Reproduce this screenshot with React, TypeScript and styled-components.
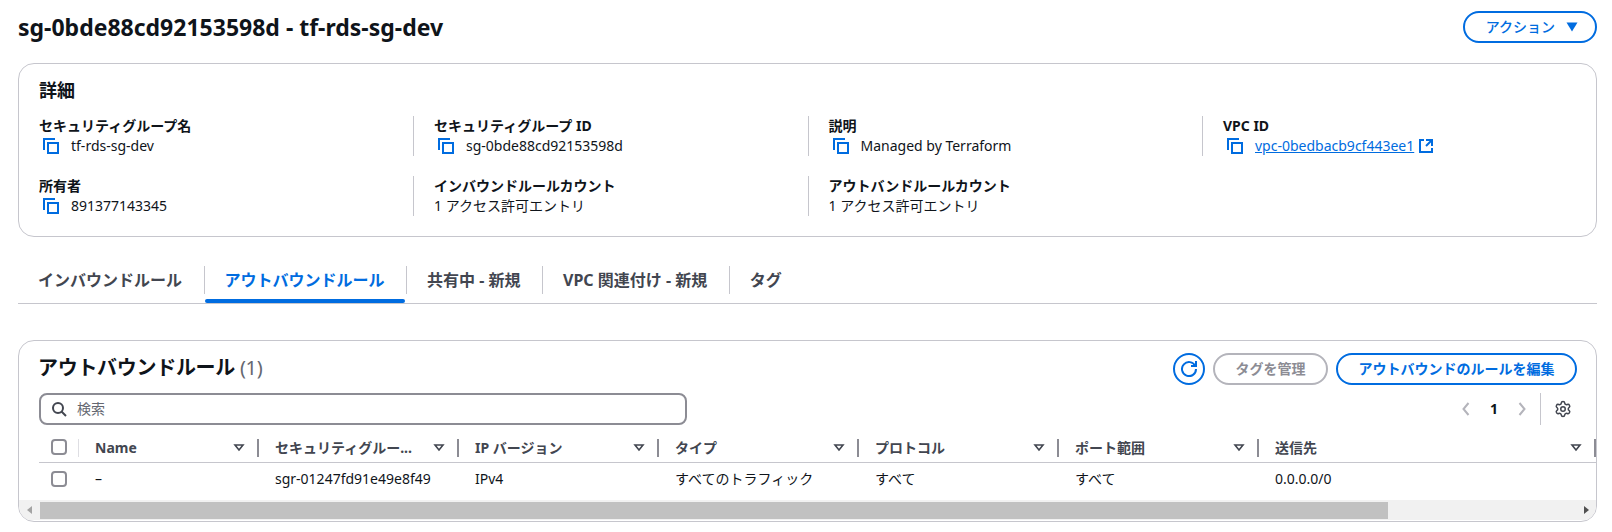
import React from 'react'
import styled, { createGlobalStyle } from 'styled-components'
import { Settings } from 'lucide-react'

const blue = '#006ce0'
const ink = '#0f141a'
const soft = '#424650'
const line = '#c6c6cd'

const GlobalStyle = createGlobalStyle`
    html, body {
        margin: 0;
        background: #fff;
    }
    body {
        font-family: "Noto Sans", "Noto Sans CJK JP", sans-serif;
        font-size: 14px;
        line-height: 20px;
        color: ${ink};
    }
    * {
        box-sizing: border-box;
    }
`

const CopyIcon = () => (
    <Glyph viewBox="0 0 16 16">
        <path d="M1 12V1h11" />
        <rect x="5" y="5" width="10" height="10" />
    </Glyph>
)

const ExternalIcon = () => (
    <Glyph viewBox="0 0 16 16">
        <path d="M14 8V2H8" />
        <path d="M14 2 8 8" />
        <path d="M6 2H2v12h12v-4" />
    </Glyph>
)

const RefreshIcon = () => (
    <Glyph viewBox="0 0 16 16">
        <path d="M10 5h5V0" />
        <path d="M15 8a7 7 0 1 1-.7-3" />
    </Glyph>
)

const SearchIcon = () => (
    <Glyph viewBox="0 0 16 16">
        <circle cx="7" cy="7" r="5" />
        <path d="m15 15-4.500-4.500" />
    </Glyph>
)

const FilterCaret = () => (
    <Caret viewBox="0 0 16 16">
        <path d="M4 5h8l-4 5z" />
    </Caret>
)

const details = [
    [
        { label: 'セキュリティグループ名', value: 'tf-rds-sg-dev', copy: true },
        { label: 'セキュリティグループ ID', value: 'sg-0bde88cd92153598d', copy: true },
        { label: '説明', value: 'Managed by Terraform', copy: true },
        { label: 'VPC ID', value: 'vpc-0bedbacb9cf443ee1', copy: true, link: true }
    ],
    [
        { label: '所有者', value: '891377143345', copy: true },
        { label: 'インバウンドルールカウント', value: '1 アクセス許可エントリ' },
        { label: 'アウトバンドルールカウント', value: '1 アクセス許可エントリ' }
    ]
]

const tabs = ['インバウンドルール', 'アウトバウンドルール', '共有中 - 新規', 'VPC 関連付け - 新規', 'タグ']

const columns = [
    { title: 'Name', width: 180, cell: '–' },
    { title: 'セキュリティグルー...', width: 200, cell: 'sgr-01247fd91e49e8f49' },
    { title: 'IP バージョン', width: 200, cell: 'IPv4' },
    { title: 'タイプ', width: 200, cell: 'すべてのトラフィック' },
    { title: 'プロトコル', width: 200, cell: 'すべて' },
    { title: 'ポート範囲', width: 200, cell: 'すべて' },
    { title: '送信先', width: 337, cell: '0.0.0.0/0' }
]

const App = () => (
    <>
        <GlobalStyle />
        <Page>
            <PageHeader>
                <Title>sg-0bde88cd92153598d - tf-rds-sg-dev</Title>
                <ActionButton>
                    アクション
                    <svg width="12" height="10" viewBox="0 0 12 10">
                        <path d="M0.500 0.500h11L6 9.500z" fill={blue} />
                    </svg>
                </ActionButton>
            </PageHeader>

            <Card>
                <CardHeading>詳細</CardHeading>
                <DetailGrid>
                    {details.flat().map((item, i) => (
                        <DetailCell key={item.label} $first={i % 4 === 0}>
                            <DetailLabel>{item.label}</DetailLabel>
                            <DetailValue>
                                {item.copy && (
                                    <CopyBox>
                                        <CopyIcon />
                                    </CopyBox>
                                )}
                                {item.link ? (
                                    <>
                                        <ValueLink href="#">{item.value}</ValueLink>
                                        <ExternalBox>
                                            <ExternalIcon />
                                        </ExternalBox>
                                    </>
                                ) : (
                                    item.value
                                )}
                            </DetailValue>
                        </DetailCell>
                    ))}
                </DetailGrid>
            </Card>

            <TabBar>
                {tabs.map((tab, i) => (
                    <Tab key={tab} $active={i === 1} $last={i === tabs.length - 1}>
                        {tab}
                    </Tab>
                ))}
            </TabBar>

            <TableCard>
                <TableTop>
                    <TableTitle>
                        アウトバウンドルール <Count>(1)</Count>
                    </TableTitle>
                    <TableActions>
                        <IconButton>
                            <RefreshIcon />
                        </IconButton>
                        <PillButton $disabled>タグを管理</PillButton>
                        <PillButton>アウトバウンドのルールを編集</PillButton>
                    </TableActions>
                </TableTop>

                <FilterRow>
                    <SearchBox>
                        <SearchSlot>
                            <SearchIcon />
                        </SearchSlot>
                        検索
                    </SearchBox>
                    <Pager>
                        <PagerArrow viewBox="0 0 16 16">
                            <path d="m10.500 2-5 6 5 6" />
                        </PagerArrow>
                        <PageNumber>1</PageNumber>
                        <PagerArrow viewBox="0 0 16 16">
                            <path d="m5.500 2 5 6-5 6" />
                        </PagerArrow>
                        <PagerDivider />
                        <SettingsSlot>
                            <Settings size={18} strokeWidth={2} />
                        </SettingsSlot>
                    </Pager>
                </FilterRow>

                <TableArea>
                    <HeadRow>
                        <SelectHead>
                            <Checkbox />
                        </SelectHead>
                        {columns.map(col => (
                            <HeadCell key={col.title} $width={col.width}>
                                <HeadText>{col.title}</HeadText>
                                <FilterCaret />
                            </HeadCell>
                        ))}
                    </HeadRow>
                    <BodyRow>
                        <SelectCell>
                            <Checkbox />
                        </SelectCell>
                        {columns.map(col => (
                            <BodyCell key={col.title} $width={col.width}>
                                {col.cell}
                            </BodyCell>
                        ))}
                    </BodyRow>
                </TableArea>

                <ScrollTrack>
                    <ScrollArrow $side="left" />
                    <ScrollThumb />
                    <ScrollArrow $side="right" />
                </ScrollTrack>
            </TableCard>
        </Page>
    </>
)

const Glyph = styled.svg`
    display: block;
    width: 16px;
    height: 16px;
    fill: none;
    stroke: currentColor;
    stroke-width: 2;
`

const Caret = styled.svg`
    display: block;
    width: 16px;
    height: 16px;
    fill: none;
    stroke: ${soft};
    stroke-width: 1.6;
    flex: none;
`

const Page = styled.div`
    width: 1612px;
    height: 532px;
    overflow: hidden;
    padding: 11px 15px 0 18px;
    background: #fff;
`

const PageHeader = styled.div`
    display: flex;
    justify-content: space-between;
    align-items: center;
    height: 32px;
    margin-bottom: 20px;
`

const Title = styled.h1`
    margin: 0;
    font-size: 23px;
    line-height: 32px;
    font-weight: 700;
    color: ${ink};
`

const ActionButton = styled.div`
    display: flex;
    align-items: center;
    gap: 11px;
    height: 32px;
    padding: 0 17px 0 21px;
    border: 2px solid ${blue};
    border-radius: 20px;
    color: ${blue};
    font-weight: 500;
    background: #fff;
`

const Card = styled.section`
    height: 174px;
    border: 1px solid ${line};
    border-radius: 16px;
    padding: 14px 20px 20px;
`

const CardHeading = styled.h2`
    margin: 0 0 14px;
    font-size: 18px;
    line-height: 24px;
    font-weight: 700;
`

const DetailGrid = styled.div`
    display: grid;
    grid-template-columns: 374px repeat(3, 394.5px);
    row-gap: 20px;
`

const DetailCell = styled.div<{ $first?: boolean }>`
    height: 40px;
    padding-left: ${({ $first }) => ($first ? 0 : 20)}px;
    border-left: ${({ $first }) => ($first ? 'none' : `1px solid ${line}`)};
`

const DetailLabel = styled.div`
    font-weight: 700;
    white-space: nowrap;
`

const DetailValue = styled.div`
    display: flex;
    align-items: center;
    white-space: nowrap;
`

const CopyBox = styled.span`
    color: ${blue};
    padding: 0 12px 0 4px;
`

const ValueLink = styled.a`
    color: ${blue};
    text-decoration: underline;
`

const ExternalBox = styled.span`
    color: ${blue};
    margin-left: 4px;
`

const TabBar = styled.div`
    display: flex;
    margin-top: 29px;
    padding-bottom: 9px;
    border-bottom: 1px solid ${line};
`

const Tab = styled.div<{ $active?: boolean; $last?: boolean }>`
    position: relative;
    height: 28px;
    padding: 0 21.5px 0 20px;
    border-right: ${({ $last }) => ($last ? 'none' : `1px solid ${line}`)};
    font-size: 16px;
    font-weight: 700;
    line-height: 28px;
    color: ${({ $active }) => ($active ? blue : soft)};

    &::after {
        content: '';
        display: ${({ $active }) => ($active ? 'block' : 'none')};
        position: absolute;
        left: 0;
        right: 1px;
        top: 33px;
        height: 4px;
        border-radius: 2px;
        background: ${blue};
    }
`

const TableCard = styled.section`
    height: 182px;
    margin-top: 36px;
    border: 1px solid ${line};
    border-radius: 16px;
    overflow: hidden;
`

const TableTop = styled.div`
    display: flex;
    justify-content: space-between;
    align-items: flex-start;
    padding: 12px 19px 0 19px;
`

const TableTitle = styled.h2`
    margin: 0;
    padding-top: 1px;
    font-size: 20px;
    line-height: 28px;
    font-weight: 700;
    letter-spacing: -0.3px;
`

const Count = styled.span`
    font-weight: 400;
    color: #656871;
`

const TableActions = styled.div`
    display: flex;
    gap: 8px;
`

const IconButton = styled.div`
    display: flex;
    align-items: center;
    justify-content: center;
    width: 32px;
    height: 32px;
    border: 2px solid ${blue};
    border-radius: 50%;
    color: ${blue};
`

const PillButton = styled.div<{ $disabled?: boolean }>`
    height: 32px;
    padding: 0 20.5px;
    border: 2px solid ${({ $disabled }) => ($disabled ? '#b4b4bb' : blue)};
    border-radius: 20px;
    font-weight: 700;
    line-height: 28px;
    color: ${({ $disabled }) => ($disabled ? '#8c8c94' : blue)};
    white-space: nowrap;
`

const FilterRow = styled.div`
    display: flex;
    justify-content: space-between;
    align-items: center;
    margin-top: 8px;
    padding: 0 24px 0 20px;
`

const SearchBox = styled.div`
    display: flex;
    align-items: center;
    width: 648px;
    height: 32px;
    border: 2px solid #8c8c94;
    border-radius: 8px;
    color: #656871;
`

const SearchSlot = styled.span`
    color: ${soft};
    padding: 0 10px;
`

const Pager = styled.div`
    display: flex;
    align-items: center;
    height: 32px;
`

const PagerArrow = styled.svg`
    display: block;
    width: 16px;
    height: 16px;
    fill: none;
    stroke: #b4b4bb;
    stroke-width: 2;
`

const PageNumber = styled.span`
    width: 40px;
    text-align: center;
    font-weight: 700;
`

const PagerDivider = styled.span`
    width: 1px;
    height: 32px;
    margin: 0 13px 0 10px;
    background: ${line};
`

const SettingsSlot = styled.span`
    display: block;
    height: 18px;
    color: ${soft};
`

const TableArea = styled.div`
    margin-left: 20px;
`

const HeadRow = styled.div`
    display: flex;
    height: 38px;
    padding: 14px 0 5px;
    border-bottom: 1px solid ${line};
`

const SelectHead = styled.div`
    width: 40px;
    height: 18px;
    padding-left: 12px;
    border-right: 1px solid #dedee3;
    flex: none;
`

const Checkbox = styled.span`
    display: block;
    width: 16px;
    height: 16px;
    border: 2px solid #8c8c94;
    border-radius: 4px;
`

const HeadCell = styled.div<{ $width: number }>`
    display: flex;
    align-items: center;
    justify-content: space-between;
    flex: none;
    width: ${({ $width }) => $width}px;
    height: 18px;
    padding: 0 10px 0 16px;
    border-right: 2px solid #8c8c94;
`

const HeadText = styled.span`
    font-weight: 700;
    color: ${soft};
    white-space: nowrap;
`

const BodyRow = styled.div`
    display: flex;
    align-items: center;
    height: 37px;
    padding-bottom: 5px;
`

const SelectCell = styled.div`
    width: 40px;
    padding-left: 12px;
    flex: none;
`

const BodyCell = styled.div<{ $width: number }>`
    flex: none;
    width: ${({ $width }) => $width}px;
    padding-left: 16px;
    white-space: nowrap;
`

const ScrollTrack = styled.div`
    display: flex;
    align-items: center;
    height: 20px;
    padding: 0 7px 0 8px;
    background: #f1f1f1;
`

const ScrollArrow = styled.span<{ $side: 'left' | 'right' }>`
    width: 0;
    height: 0;
    border-top: 4px solid transparent;
    border-bottom: 4px solid transparent;
    border-right: ${({ $side }) => ($side === 'left' ? '5px solid #a3a3a3' : 'none')};
    border-left: ${({ $side }) => ($side === 'right' ? '5px solid #505050' : 'none')};
`

const ScrollThumb = styled.span`
    width: 1348px;
    height: 17px;
    margin-left: 8px;
    margin-right: auto;
    background: #c1c1c1;
`

export default App
